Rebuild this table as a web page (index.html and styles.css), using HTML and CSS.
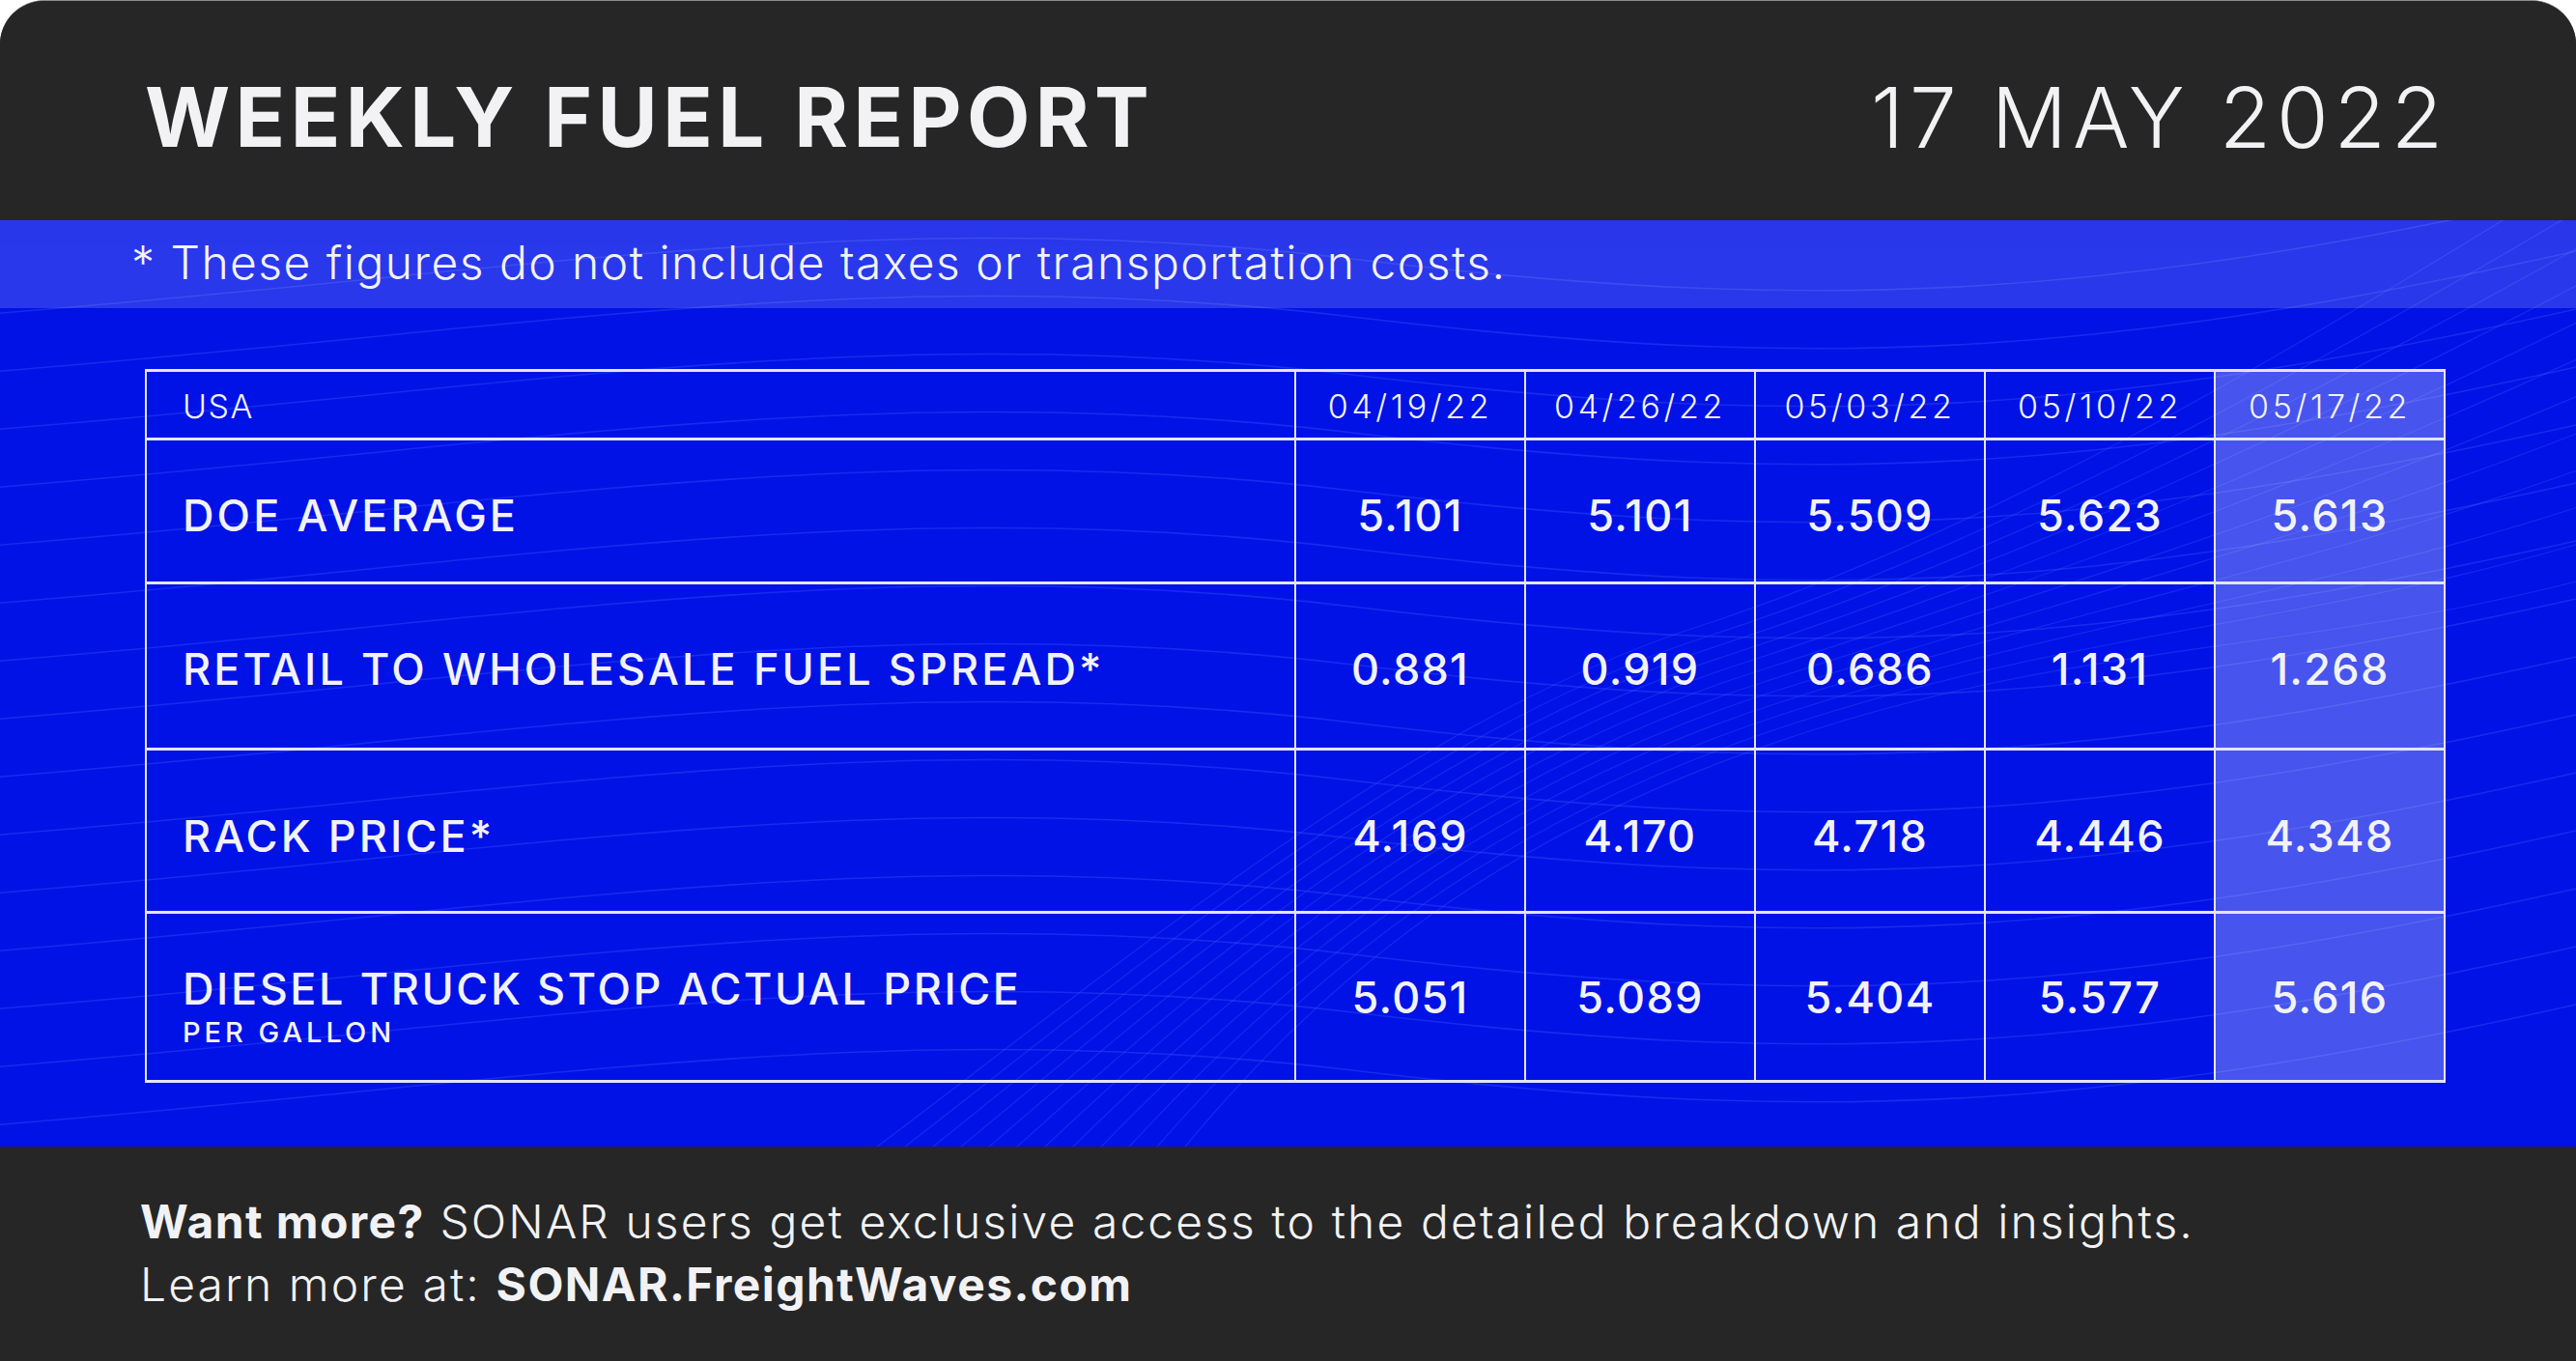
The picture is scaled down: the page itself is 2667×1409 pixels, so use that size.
FILE: index.html
```html
<!DOCTYPE html>
<html lang="en">
<head>
<meta charset="utf-8">
<title>Weekly Fuel Report</title>
<link rel="stylesheet" href="styles.css">
</head>
<body>
<div class="card">
  <header class="header">
    <h1 class="title">WEEKLY FUEL REPORT</h1>
    <div class="date">17 MAY 2022</div>
  </header>
  <main class="main">
    <svg class="waves" viewBox="0 0 2667 959" preserveAspectRatio="none" aria-hidden="true">
      <g fill="none" stroke="#4a66ff" stroke-width="1.6" opacity="0.3">
        <path d="M-50,100 C500,60 900,-20 1400,40 S2200,80 2720,-40"/>
        <path d="M-50,160 C500,120 900,40 1400,100 S2200,140 2720,20"/>
        <path d="M-50,220 C500,180 900,100 1400,160 S2200,200 2720,80"/>
        <path d="M-50,280 C500,240 900,160 1400,220 S2200,260 2720,140"/>
        <path d="M-50,340 C500,300 900,220 1400,280 S2200,320 2720,200"/>
        <path d="M-50,400 C500,360 900,280 1400,340 S2200,380 2720,260"/>
        <path d="M-50,460 C500,420 900,340 1400,400 S2200,440 2720,320"/>
        <path d="M-50,520 C500,480 900,400 1400,460 S2200,500 2720,380"/>
        <path d="M-50,580 C500,540 900,460 1400,520 S2200,560 2720,440"/>
        <path d="M-50,640 C500,600 900,520 1400,580 S2200,620 2720,500"/>
        <path d="M-50,700 C500,660 900,580 1400,640 S2200,680 2720,560"/>
        <path d="M-50,760 C500,720 900,640 1400,700 S2200,740 2720,620"/>
        <path d="M-50,820 C500,780 900,700 1400,760 S2200,800 2720,680"/>
        <path d="M-50,880 C500,840 900,760 1400,820 S2200,860 2720,740"/>
        <path d="M-50,940 C500,900 900,820 1400,880 S2200,920 2720,800"/>
      </g>
      <g fill="none" stroke="#3a5cff" stroke-width="1.3" opacity="0.3">
        <path d="M880,980 C1150,780 1450,520 1760,420 S2400,120 2720,-80"/>
        <path d="M910,980 C1170,780 1460,530 1770,430 S2400,150 2720,-40"/>
        <path d="M940,980 C1190,780 1470,540 1780,440 S2400,180 2720,0"/>
        <path d="M970,980 C1210,780 1480,550 1790,450 S2400,210 2720,40"/>
        <path d="M1000,980 C1230,780 1490,560 1800,460 S2400,240 2720,80"/>
        <path d="M1030,980 C1250,780 1500,570 1810,470 S2400,270 2720,120"/>
        <path d="M1060,980 C1270,780 1510,580 1820,480 S2400,300 2720,160"/>
        <path d="M1090,980 C1290,780 1520,590 1830,490 S2400,330 2720,200"/>
        <path d="M1120,980 C1310,780 1530,600 1840,500 S2400,360 2720,240"/>
        <path d="M1150,980 C1330,780 1540,610 1850,510 S2400,390 2720,280"/>
        <path d="M1180,980 C1350,780 1550,620 1860,520 S2400,420 2720,320"/>
        <path d="M1210,980 C1370,780 1560,630 1870,530 S2400,450 2720,360"/>
      </g>
    </svg>
    <div class="note">* These figures do not include taxes or transportation costs.</div>
    <div class="table-wrap">
      <table class="report">
        <colgroup>
          <col class="c-label">
          <col class="c-num">
          <col class="c-num">
          <col class="c-num">
          <col class="c-num">
          <col class="c-num">
        </colgroup>
        <thead>
          <tr class="r-head">
            <th class="label">USA</th>
            <th>04/19/22</th>
            <th>04/26/22</th>
            <th>05/03/22</th>
            <th>05/10/22</th>
            <th class="hl">05/17/22</th>
          </tr>
        </thead>
        <tbody>
          <tr class="r1">
            <td class="label">DOE AVERAGE</td>
            <td>5.101</td><td>5.101</td><td>5.509</td><td>5.623</td><td class="hl">5.613</td>
          </tr>
          <tr class="r2">
            <td class="label">RETAIL TO WHOLESALE FUEL SPREAD*</td>
            <td>0.881</td><td>0.919</td><td>0.686</td><td>1.131</td><td class="hl">1.268</td>
          </tr>
          <tr class="r3">
            <td class="label">RACK PRICE*</td>
            <td>4.169</td><td>4.170</td><td>4.718</td><td>4.446</td><td class="hl">4.348</td>
          </tr>
          <tr class="r4">
            <td class="label"><span class="main-label">DIESEL TRUCK STOP ACTUAL PRICE</span><span class="sub-label">PER GALLON</span></td>
            <td>5.051</td><td>5.089</td><td>5.404</td><td>5.577</td><td class="hl">5.616</td>
          </tr>
        </tbody>
      </table>
    </div>
  </main>
  <footer class="footer">
    <p class="line"><strong>Want more?</strong> SONAR users get exclusive access to the detailed breakdown and insights.</p>
    <p class="line">Learn more at: <strong>SONAR.FreightWaves.com</strong></p>
  </footer>
</div>
</body>
</html>
```

FILE: styles.css
```css
* { box-sizing: border-box; }

html, body {
  margin: 0;
  padding: 0;
  background: #ffffff;
}

body {
  font-family: Inter, "Liberation Sans", sans-serif;
  color: #f2f2f4;
}

.card {
  width: 2667px;
  height: 1409px;
  display: flex;
  flex-direction: column;
  border-radius: 46px 46px 0 0;
  overflow: hidden;
  background: #262626;
  border-top: 1px solid #8c8c8c;
}

.header {
  height: 227px;
  flex: none;
  display: flex;
  align-items: center;
  justify-content: space-between;
  padding: 14px 132px 0 150px;
  background: #262626;
}

.title {
  margin: 0;
  font-size: 85px;
  font-weight: 700;
  line-height: 1;
  letter-spacing: 5.4px;
  color: #f2f2f4;
}

.date {
  font-size: 87px;
  font-weight: 300;
  line-height: 1;
  letter-spacing: 5.8px;
  color: #f2f2f4;
}

.main {
  position: relative;
  flex: none;
  height: 959px;
  background: #0012e6;
  overflow: hidden;
}

.waves {
  position: absolute;
  left: 0;
  top: 0;
  width: 100%;
  height: 100%;
}

.note {
  position: relative;
  height: 91px;
  display: flex;
  align-items: center;
  padding: 0 0 4px 136px;
  background: rgba(255, 255, 255, 0.16);
  font-size: 48px;
  font-weight: 300;
  letter-spacing: 1.45px;
  color: #f2f2f6;
}

.table-wrap {
  position: relative;
  padding: 63px 136px 0 150px;
}

.report {
  width: 2381px;
  border-collapse: collapse;
  table-layout: fixed;
}

.c-label { width: 1190px; }
.c-num { width: 238px; }

.report th,
.report td {
  border-top: 3px solid #e3e5f5;
  border-bottom: 3px solid #e3e5f5;
  border-left: 2px solid #e3e5f5;
  border-right: 2px solid #e3e5f5;
  text-align: center;
  vertical-align: middle;
  padding: 0;
  color: #f2f2f6;
}

.report th {
  font-size: 34px;
  font-weight: 300;
  letter-spacing: 3.6px;
  height: 71px;
  padding-top: 2px;
}

.report th.label {
  letter-spacing: 1.5px;
}

.report td {
  font-size: 45px;
  font-weight: 500;
  letter-spacing: 1.3px;
}

.report td.label {
  letter-spacing: 3.1px;
}

.report .label {
  text-align: left;
  padding-left: 37px;
}

.report .hl {
  background: rgba(255, 255, 255, 0.28);
}

.r1 td { height: 149px; padding-top: 8px; }
.r2 td { height: 172px; padding-top: 5px; }
.r3 td { height: 169px; padding-top: 11px; }
.r4 td { height: 175px; padding-top: 0; }
.r4 td.label { padding-top: 18px; }

.r4 .main-label {
  display: block;
  line-height: 56px;
  letter-spacing: 2.6px;
}

.sub-label {
  display: block;
  font-size: 29px;
  font-weight: 500;
  letter-spacing: 4px;
  line-height: 34px;
}

.footer {
  flex: 1;
  padding: 45px 0 0 145px;
  background: #262626;
}

.line {
  margin: 0;
  font-size: 48px;
  font-weight: 300;
  line-height: 65px;
  letter-spacing: 2.1px;
  color: #f2f2f4;
}

.line strong {
  font-weight: 700;
  letter-spacing: 1.4px;
}
```
